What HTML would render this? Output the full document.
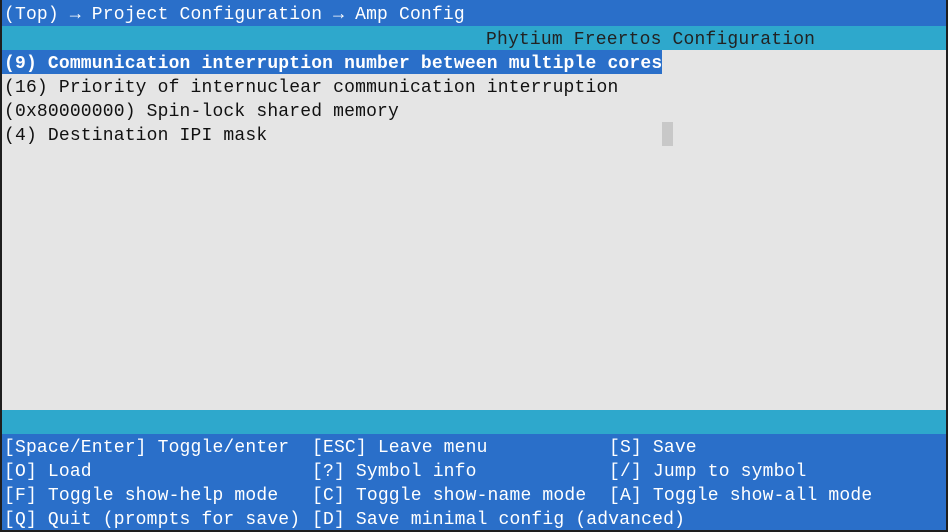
<html><head><style>
body{margin:0;width:948px;height:532px;background:#1e1e1e;position:relative;overflow:hidden;font-family:"Liberation Mono",monospace;font-size:18px;letter-spacing:0.17px}
.b{position:absolute;left:2px;right:2px}
.t{position:absolute;white-space:pre;line-height:24px;height:24px;padding-top:2px;box-sizing:border-box}
</style></head><body>
<div class="b" style="top:0;height:26px;background:#2a6fc9"></div>
<div class="b" style="top:26px;height:24px;background:#2ea8cc"></div>
<div class="b" style="top:50px;height:360px;background:#e5e5e5"></div>
<div class="b" style="top:410px;height:24px;background:#2ea8cc"></div>
<div class="b" style="top:434px;height:96px;background:#2a6fc9"></div>
<div class="t" style="left:4px;top:1px;color:#fff">(Top) → Project Configuration → Amp Config</div>
<div class="t" style="left:486px;top:26px;color:#222">Phytium Freertos Configuration</div>
<div style="position:absolute;left:2px;top:50px;width:660px;height:24px;background:#2a6fc9"></div>
<div class="t" style="left:4px;top:50px;color:#fff;font-weight:bold">(9) Communication interruption number between multiple cores</div>
<div class="t" style="left:4px;top:74px;color:#111">(16) Priority of internuclear communication interruption</div>
<div class="t" style="left:4px;top:98px;color:#111">(0x80000000) Spin-lock shared memory</div>
<div class="t" style="left:4px;top:122px;color:#111">(4) Destination IPI mask</div>
<div style="position:absolute;left:662px;top:122px;width:11px;height:24px;background:#c8c8c8"></div>
<div class="t" style="left:4px;top:434px;color:#fff">[Space/Enter] Toggle/enter</div>
<div class="t" style="left:312px;top:434px;color:#fff">[ESC] Leave menu</div>
<div class="t" style="left:609px;top:434px;color:#fff">[S] Save</div>
<div class="t" style="left:4px;top:458px;color:#fff">[O] Load</div>
<div class="t" style="left:312px;top:458px;color:#fff">[?] Symbol info</div>
<div class="t" style="left:609px;top:458px;color:#fff">[/] Jump to symbol</div>
<div class="t" style="left:4px;top:482px;color:#fff">[F] Toggle show-help mode</div>
<div class="t" style="left:312px;top:482px;color:#fff">[C] Toggle show-name mode</div>
<div class="t" style="left:609px;top:482px;color:#fff">[A] Toggle show-all mode</div>
<div class="t" style="left:4px;top:506px;color:#fff">[Q] Quit (prompts for save)</div>
<div class="t" style="left:312px;top:506px;color:#fff">[D] Save minimal config (advanced)</div>
</body></html>
